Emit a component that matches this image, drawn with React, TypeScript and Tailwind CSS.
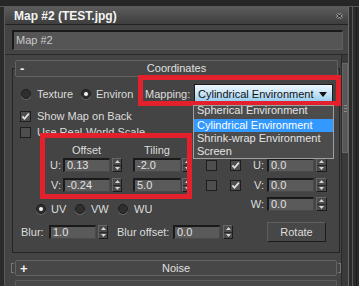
import React from "react";

// 3ds Max style material editor rollout: "Map #2 (TEST.jpg)" with the Coordinates
// panel open, the Mapping dropdown expanded and two red annotation boxes on top.

const FONT = "font-['Liberation_Sans',Arial,sans-serif]";

function Radio({ on = false }: { on?: boolean }) {
  return (
    <span className="flex h-[10px] w-[10px] shrink-0 items-center justify-center rounded-full border border-[#1b1b1b] bg-[#2f2f2f] shadow-[0_1px_0_#6a6a6a]">
      {on && <span className="h-[4px] w-[4px] rounded-full bg-[#f4f4f4]" />}
    </span>
  );
}

function Check({ on = false }: { on?: boolean }) {
  return (
    <span className="flex h-[11px] w-[11px] shrink-0 items-center justify-center border border-[#1e1e1e] bg-[#4e4e4e]">
      {on && (
        <svg width="9" height="9" viewBox="0 0 9 9">
          <path d="M1.4 4.4 3.5 6.8 7.9 1.6" fill="none" stroke="#e2e2e2" strokeWidth="1.7" />
        </svg>
      )}
    </span>
  );
}

function Field({ value, className }: { value: string; className: string }) {
  return (
    <div
      className={`h-[14px] shrink-0 border-t-2 border-l-2 border-r border-b border-t-[#1a1a1a] border-l-[#1a1a1a] border-r-[#4a4a4a] border-b-[#4a4a4a] bg-[#5a5a5a] pl-[2px] text-[11px] leading-[11px] text-[#e2e2e2] ${className}`}
    >
      {value}
    </div>
  );
}

function Spin({ className = "w-[10px]" }: { className?: string }) {
  return (
    <div
      className={`flex h-[14px] shrink-0 flex-col border border-t-[#666] border-l-[#666] border-r-[#1c1c1c] border-b-[#1c1c1c] bg-[#4a4a4a] ${className}`}
    >
      <div className="flex flex-1 items-center justify-center border-b border-b-[#2a2a2a]">
        <svg width="5" height="3" viewBox="0 0 5 3">
          <path d="M0 3H5L2.5 0Z" fill="#d4d4d4" />
        </svg>
      </div>
      <div className="flex flex-1 items-center justify-center">
        <svg width="5" height="3" viewBox="0 0 5 3">
          <path d="M0 0H5L2.5 3Z" fill="#d4d4d4" />
        </svg>
      </div>
    </div>
  );
}

function RollHeader({ sign, title, className }: { sign: string; title: string; className: string }) {
  return (
    <div className={`flex items-center rounded-[2px] border border-[#636363] bg-[#474747] ${className}`}>
      <span className="w-[16px] pl-[4px] text-[13px] font-bold leading-none text-[#f2f2f2]">{sign}</span>
      <span className="flex-1 text-center text-[11px] text-[#e0e0e0]">{title}</span>
      <span className="w-[16px]" />
    </div>
  );
}

function UvwRow({ label, first, second }: { label: string; first?: boolean; second?: boolean }) {
  const boxes = first !== undefined;
  return (
    <div className="flex h-[14px] items-center">
      {boxes ? (
        <>
          <span className="ml-[3px]">
            <Check on={first} />
          </span>
          <span className="ml-[13px]">
            <Check on={second} />
          </span>
        </>
      ) : (
        <span className="w-[38px]" />
      )}
      <span className="w-[23px] text-right">{label}</span>
      <Field value="0.0" className="ml-[3px] w-[47px]" />
      <Spin className="ml-[2px] w-[11px]" />
    </div>
  );
}

function OffsetRow({ label, offset, tiling }: { label: string; offset: string; tiling: string }) {
  return (
    <div className="flex h-[14px] items-center">
      <span className="w-[48px] text-right">{label}</span>
      <Field value={offset} className="ml-[2px] w-[47px]" />
      <Spin className="ml-[2px] w-[10px]" />
      <Field value={tiling} className="ml-[11px] w-[48px]" />
      <Spin className="ml-[1px] w-[10px]" />
    </div>
  );
}

export default function App() {
  return (
    <div
      className={`relative flex h-[286px] w-[359px] flex-col overflow-hidden bg-[#2d2d2d] text-[11px] text-[#dcdcdc] ${FONT}`}
    >
      <div className="h-[7px] shrink-0 border-b border-b-[#585858] bg-[#262626]" />
      <div className="flex min-h-0 flex-1">
        <div className="w-[5px] shrink-0 border-r border-r-[#5a5a5a] bg-[#2b2b2b]" />

        <div className="flex w-[343px] shrink-0 flex-col bg-[#444]">
          {/* title bar */}
          <div className="flex h-[18px] shrink-0 items-center justify-between border-b border-b-[#222] bg-linear-to-b from-[#5c5c5c] to-[#3e3e3e] pl-[9px] pr-[5px]">
            <span className="text-[12px] font-bold text-[#f4f4f4]">Map #2 (TEST.jpg)</span>
            <svg width="7" height="6" viewBox="0 0 7 6">
              <path d="M1 0.8 6 5.2M6 0.8 1 5.2" stroke="#cfcfcf" strokeWidth="2.4" />
              <path d="M1 0.8 6 5.2M6 0.8 1 5.2" stroke="#2a2a2a" strokeWidth="1.2" />
            </svg>
          </div>

          {/* map name */}
          <div className="ml-[7px] mt-[5px] flex h-[20px] w-[331px] shrink-0 items-center border-t-2 border-l-2 border-r border-b border-t-[#1a1a1a] border-l-[#1a1a1a] border-r-[#5e5e5e] border-b-[#5e5e5e] bg-[#555] pl-[2px] text-[11px] text-[#c9c9c9]">
            Map #2
          </div>

          {/* rollouts + scrollbar */}
          <div className="mt-[4px] flex min-h-0 flex-1 border-t border-t-[#2a2a2a]">
            <div className="flex w-[336px] shrink-0 flex-col pt-[13px]">
              <div className="ml-[7px] flex w-[328px] flex-col border border-[#262626] pb-[10px]">
                <RollHeader sign="-" title="Coordinates" className="ml-[2px] mr-[1px] -mt-[9px] h-[17px]" />

                <div className="mt-[7px] flex h-[20px] items-center pl-[8px]">
                  <span className="flex w-[60px] items-center gap-[6px]">
                    <Radio />
                    Texture
                  </span>
                  <span className="flex w-[64px] items-center gap-[5px]">
                    <Radio on />
                    Environ
                  </span>
                  <span className="w-[49px]">Mapping:</span>
                  <div className="flex h-[20px] w-[139px] items-center justify-between border border-[#1a1a1a] bg-linear-to-b from-[#eef7fd] via-[#c4e3f6] to-[#8cc8ee] pl-[3px] pr-[5px] text-[11px] text-[#111]">
                    <span>Cylindrical Environment</span>
                    <svg width="8" height="5" viewBox="0 0 8 5">
                      <path d="M0 0H8L4 5Z" fill="#111" />
                    </svg>
                  </div>
                </div>

                <div className="mt-[6px] flex h-[12px] items-center gap-[6px] pl-[7px]">
                  <Check on />
                  Show Map on Back
                </div>
                <div className="mt-[4px] flex h-[12px] items-center gap-[6px] pl-[7px]">
                  <Check />
                  Use Real-World Scale
                </div>

                <div className="flex items-start">
                  <div className="flex w-[190px] flex-col">
                    <div className="mt-[6px] flex h-[13px] items-center">
                      <span className="ml-[50px] w-[47px] text-center">Offset</span>
                      <span className="ml-[23px] w-[48px] text-center">Tiling</span>
                    </div>
                    <div className="mt-[1px]">
                      <OffsetRow label="U:" offset="0.13" tiling="-2.0" />
                    </div>
                    <div className="mt-[6px]">
                      <OffsetRow label="V:" offset="-0.24" tiling="5.0" />
                    </div>
                    <div className="mt-[11px] flex h-[12px] items-center pl-[23px]">
                      <span className="flex w-[39px] items-center gap-[5px]">
                        <Radio on />
                        UV
                      </span>
                      <span className="flex w-[43px] items-center gap-[6px]">
                        <Radio />
                        VW
                      </span>
                      <span className="flex items-center gap-[6px]">
                        <Radio />
                        WU
                      </span>
                    </div>
                  </div>
                  <div className="mt-[20px] flex flex-col">
                    <UvwRow label="U:" first={false} second />
                    <div className="mt-[6px]">
                      <UvwRow label="V:" first={false} second />
                    </div>
                    <div className="mt-[5px]">
                      <UvwRow label="W:" />
                    </div>
                  </div>
                </div>

                <div className="mt-[7px] flex h-[20px] items-center pl-[8px]">
                  <span className="w-[28px]">Blur:</span>
                  <Field value="1.0" className="w-[47px]" />
                  <Spin className="ml-[2px] w-[10px]" />
                  <span className="ml-[9px] w-[56px]">Blur offset:</span>
                  <Field value="0.0" className="w-[47px]" />
                  <Spin className="ml-[3px] w-[10px]" />
                  <div className="ml-[34px] flex h-[20px] w-[59px] items-center justify-center border border-t-[#5f5f5f] border-l-[#5f5f5f] border-r-[#1c1c1c] border-b-[#1c1c1c] bg-[#474747]">
                    Rotate
                  </div>
                </div>
              </div>

              <div className="mt-[7px] flex items-center">
                <span className="ml-[6px] h-[10px] w-[3px] border-y border-l border-[#777]" />
                <RollHeader sign="+" title="Noise" className="ml-[1px] h-[16px] w-[322px]" />
                <span className="ml-[1px] h-[10px] w-[3px] border-y border-r border-[#777]" />
              </div>
              <div className="ml-[10px] mt-[4px] h-[10px] w-[322px] rounded-t-[2px] border-x border-t border-[#5c5c5c] bg-[#474747]" />
            </div>

            <div className="flex w-[7px] shrink-0 flex-col border-l border-l-[#2a2a2a] bg-[#3a3a3a]">
              <div className="mt-[8px] flex h-[90px] flex-col items-center justify-center gap-[2px] border border-[#666] bg-[#575757]">
                <span className="h-px w-[3px] bg-[#8a8a8a]" />
                <span className="h-px w-[3px] bg-[#8a8a8a]" />
                <span className="h-px w-[3px] bg-[#8a8a8a]" />
              </div>
            </div>
          </div>
        </div>

        <div className="flex w-[11px] shrink-0 border-l border-l-[#6a6a6a] bg-[#2a2a2a]">
          <span className="ml-[3px] w-px bg-[#5a5a5a]" />
          <span className="ml-[3px] w-px bg-[#1a1a1a]" />
        </div>
      </div>

      {/* expanded Mapping list */}
      <div className="absolute left-[193px] top-[105px] z-20 flex h-[54px] w-[141px] flex-col overflow-hidden border border-[#a0a0a0] bg-[#4c4c4c] text-[11px] text-[#e4e4e4]">
        <div className="h-[13px] shrink-0 overflow-hidden pl-[3px]">
          <div className="-mt-[2px] leading-[13px]">Spherical Environment</div>
        </div>
        <div className="h-[13px] shrink-0 bg-[#3399ff] pl-[3px] leading-[13px] text-white">Cylindrical Environment</div>
        <div className="h-[13px] shrink-0 pl-[3px] leading-[13px]">Shrink-wrap Environment</div>
        <div className="h-[13px] shrink-0 pl-[3px] leading-[13px]">Screen</div>
      </div>

      {/* red annotation boxes */}
      <div className="absolute left-[138px] top-[75px] z-10 h-[31px] w-[203px] border-[5px] border-[#e3212c]" />
      <div className="absolute left-[40px] top-[133px] z-10 h-[66px] w-[152px] border-[5px] border-[#e3212c]" />
    </div>
  );
}
